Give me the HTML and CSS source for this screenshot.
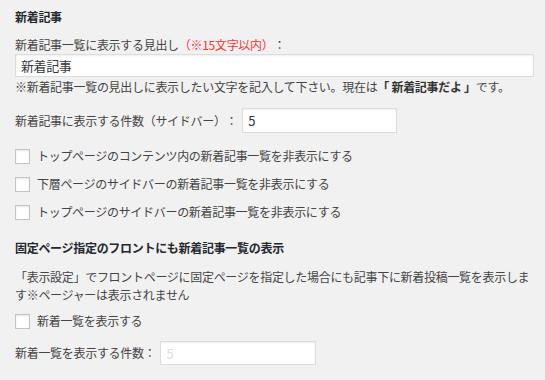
FILE: index.html
```html
<!DOCTYPE html>
<html lang="ja">
<head>
    <meta charset="UTF-8">
    <title>新着記事設定</title>
    <link rel="stylesheet" href="styles.css">
</head>
<body>
    <div class="settings">
        <h3 class="section-title">新着記事</h3>
        <label class="field-label" for="newTitle">新着記事一覧に表示する見出し<span class="note">（※15文字以内）</span>：</label>
        <input type="text" id="newTitle" class="text-wide" value="新着記事">
        <p class="hint">※新着記事一覧の見出しに表示したい文字を記入して下さい。現在は<strong>「 新着記事だよ 」</strong>です。</p>

        <div class="inline-row row-count">
            <label for="sideCount">新着記事に表示する件数（サイドバー）：</label>
            <input type="text" id="sideCount" class="text-short" value="5">
        </div>

        <div class="checks">
            <label class="check-row"><input type="checkbox"><span>トップページのコンテンツ内の新着記事一覧を非表示にする</span></label>
            <label class="check-row"><input type="checkbox"><span>下層ページのサイドバーの新着記事一覧を非表示にする</span></label>
            <label class="check-row"><input type="checkbox"><span>トップページのサイドバーの新着記事一覧を非表示にする</span></label>
        </div>

        <h3 class="section-title second">固定ページ指定のフロントにも新着記事一覧の表示</h3>
        <p class="desc">「表示設定」でフロントページに固定ページを指定した場合にも記事下に新着投稿一覧を表示します※ページャーは表示されません</p>

        <label class="check-row"><input type="checkbox"><span>新着一覧を表示する</span></label>

        <div class="inline-row row-front">
            <label for="frontCount">新着一覧を表示する件数：</label>
            <input type="text" id="frontCount" class="text-short front" placeholder="5">
        </div>
    </div>
</body>
</html>
```

FILE: styles.css
```css
body {
    margin: 0;
    background: #f1f1f1;
    color: #444;
    font-family: "Noto Sans CJK JP", "Noto Sans", sans-serif;
    font-size: 12px;
    letter-spacing: -0.3px;
    line-height: 18px;
    text-spacing-trim: space-all;
}
.settings {
    padding: 8px 10px 0 15px;
    width: 520px;
}
.section-title {
    margin: 0;
    font-size: 12px;
    line-height: 18px;
    font-weight: 700;
    color: #23282d;
}
.section-title.second {
    margin-top: 13px;
}
.field-label {
    display: block;
    margin-top: 10px;
}
.note {
    color: #f33;
}
input[type="text"] {
    box-sizing: border-box;
    border: 1px solid #ddd;
    box-shadow: inset 0 1px 2px rgba(0,0,0,0.07);
    background: #fff;
    color: #32373c;
    font-family: inherit;
    font-size: 13px;
    letter-spacing: -0.4px;
    padding: 0 5px;
    outline: none;
}
.text-wide {
    display: block;
    width: 519px;
    height: 23px;
}
.hint {
    margin: 1px 0 0 0;
}
.hint strong {
    color: #333;
}
.inline-row {
    display: flex;
    align-items: center;
}
.row-count {
    margin-top: 12px;
}
.row-front {
    margin-top: 6px;
}
.text-short {
    width: 155px;
    height: 25px;
    margin-left: 5px;
}
.text-short.front {
    width: 156px;
    height: 24px;
}
.text-short.front::placeholder {
    color: #ddd;
}
.checks {
    margin-top: 9px;
}
.check-row {
    display: flex;
    align-items: center;
    height: 28px;
}
.check-row input {
    appearance: none;
    -webkit-appearance: none;
    margin: 0 7px 0 0;
    width: 15px;
    height: 15px;
    border: 1px solid #c4c4c4;
    background: #fff;
    box-shadow: inset 0 1px 2px rgba(0,0,0,0.1);
    box-sizing: border-box;
}
.desc {
    margin: 11px 0 3px 0;
}
```
